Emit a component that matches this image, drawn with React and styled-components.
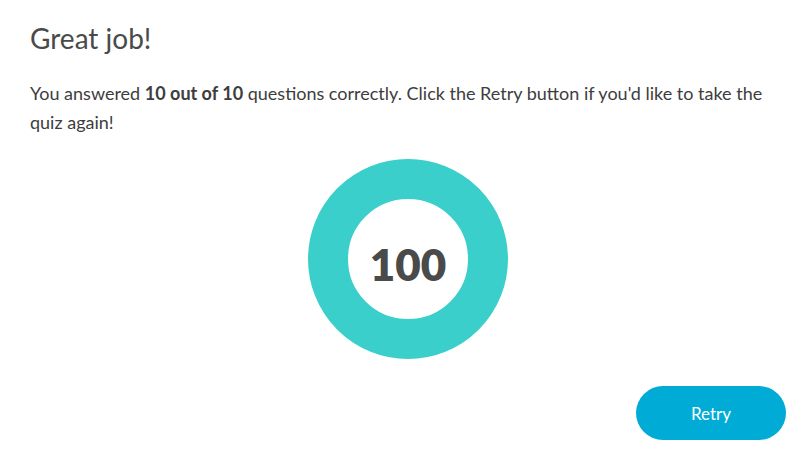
import React from 'react';
import styled, { createGlobalStyle } from 'styled-components';

const GlobalStyle = createGlobalStyle`
  body {
    margin: 0;
    background: #fff;
    font-family: Lato, 'Open Sans', Arial, sans-serif;
    color: #4a4a4a;
  }
`;

const Page = styled.div`
  width: 789px;
  height: 461px;
  box-sizing: border-box;
  padding: 18px 3px 0 30px;
  display: flex;
  flex-direction: column;
`;

const Title = styled.h1`
  margin: 0;
  font-size: 28px;
  font-weight: 400;
  line-height: 40px;
  color: #4a4a4a;
`;

const Message = styled.p`
  margin: 21px 0 0;
  font-size: 18px;
  line-height: 29px;
  padding-right: 20px;
  color: #3d3d3d;
  strong {
    font-weight: 700;
  }
`;

const ScoreWrap = styled.div`
  display: flex;
  justify-content: center;
  margin-top: 22px;
`;

const Donut = styled.div`
  width: 200px;
  height: 200px;
  border-radius: 50%;
  border: 40px solid #3acfca;
  box-sizing: border-box;
  display: flex;
  align-items: center;
  justify-content: center;
`;

const Score = styled.span`
  font-size: 44px;
  font-weight: 800;
  color: #4a4a4a;
  margin-top: 10px;
`;

const Actions = styled.div`
  display: flex;
  justify-content: flex-end;
  margin-top: 27px;
`;

const RetryButton = styled.button`
  width: 150px;
  height: 54px;
  border: none;
  border-radius: 27px;
  background: #00acd6;
  color: #fff;
  font-family: inherit;
  font-size: 17px;
  font-weight: 400;
  cursor: pointer;
`;

export default function App() {
  return (
    <>
      <GlobalStyle />
      <Page>
        <Title>Great job!</Title>
        <Message>
          You answered <strong>10 out of 10</strong> questions correctly. Click the Retry button if you'd like to take the quiz again!
        </Message>
        <ScoreWrap>
          <Donut>
            <Score>100</Score>
          </Donut>
        </ScoreWrap>
        <Actions>
          <RetryButton>Retry</RetryButton>
        </Actions>
      </Page>
    </>
  );
}
